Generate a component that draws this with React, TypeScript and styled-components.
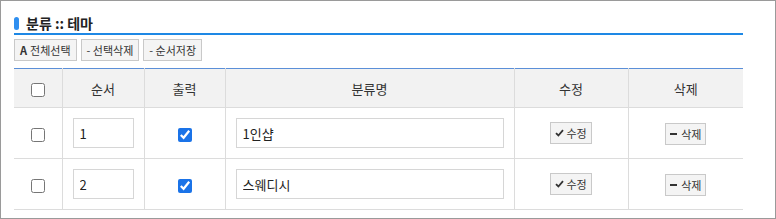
import React from "react";
import styled, { createGlobalStyle } from "styled-components";

const Global = createGlobalStyle`
  html, body { margin: 0; padding: 0; background: #fff; }
  body { font-family: "Noto Sans CJK KR", "Noto Sans", sans-serif; color: #333; }
  * { box-sizing: border-box; }
`;

const Frame = styled.div`
  width: 776px;
  height: 219px;
  border: 1px solid #9a9a9a;
  padding: 12px 32px 0 13px;
  display: flex;
  flex-direction: column;
  overflow: hidden;
`;

const TitleBar = styled.div`
  display: flex;
  align-items: center;
  gap: 7px;
  height: 20px;
  border-bottom: 2px solid #1e88e5;
  box-sizing: content-box;
`;

const Pill = styled.span`
  width: 5px;
  height: 13px;
  border-radius: 3px;
  background: #2f8ff0;
  margin-top: 1px;
`;

const Title = styled.h2`
  margin: 0;
  font-size: 14px;
  font-weight: 700;
  color: #222;
  line-height: 20px;
`;

const Toolbar = styled.div`
  display: flex;
  gap: 4px;
  margin-top: 4px;
`;

const ToolButton = styled.button`
  height: 22px;
  padding: 0 5px;
  border: 1px solid #c9c9c9;
  background: #f4f4f4;
  font-family: inherit;
  font-size: 11px;
  color: #333;
  display: flex;
  align-items: center;
  gap: 3px;
  cursor: pointer;
  b { font-weight: 700; font-size: 11px; }
`;

const Table = styled.table`
  margin-top: 7px;
  width: 729px;
  border-collapse: collapse;
  border-top: 1px solid #5b8fd8;
  table-layout: fixed;
  font-size: 12px;
`;

const Th = styled.th<{ $last?: boolean }>`
  height: 39px;
  background: #f2f2f2;
  font-weight: 400;
  font-size: 13px;
  color: #333;
  border-bottom: 1px solid #dcdcdc;
  border-right: ${(p) => (p.$last ? "none" : "1px solid #dcdcdc")};
  text-align: center;
  padding: 0;
`;

const Td = styled.td<{ $last?: boolean }>`
  height: 51px;
  border-bottom: 1px solid #dcdcdc;
  border-right: ${(p) => (p.$last ? "none" : "1px solid #dcdcdc")};
  text-align: center;
  padding: 0;
  vertical-align: middle;
`;

const Check = styled.input`
  width: 14px;
  height: 14px;
  margin: 0;
  vertical-align: middle;
  accent-color: #1a73e8;
`;

const TextInput = styled.input<{ $w: number }>`
  width: ${(p) => p.$w}px;
  height: 30px;
  border: 1px solid #d6d6d6;
  padding: 0 6px;
  font-family: inherit;
  font-size: 13px;
  color: #222;
  outline: none;
`;

const RowButton = styled.button`
  height: 22px;
  padding: 0 4px;
  border: 1px solid #c9c9c9;
  background: #f4f4f4;
  font-family: inherit;
  font-size: 11px;
  color: #333;
  display: inline-flex;
  align-items: center;
  gap: 2px;
  cursor: pointer;
`;

const Dash = styled.span`
  display: inline-block;
  width: 7px;
  height: 2px;
  background: #333;
  margin-right: 2px;
`;

const CheckIcon = () => (
  <svg width="9" height="8" viewBox="0 0 9 8">
    <path d="M1 4.2 L3.4 6.5 L8 1.2" stroke="#333" strokeWidth="1.8" fill="none" />
  </svg>
);

const rows = [
  { order: "1", name: "1인샵" },
  { order: "2", name: "스웨디시" },
];

export default function App() {
  return (
    <>
      <Global />
      <Frame>
        <TitleBar>
          <Pill />
          <Title>분류 :: 테마</Title>
        </TitleBar>
        <Toolbar>
          <ToolButton><b>A</b>전체선택</ToolButton>
          <ToolButton>- 선택삭제</ToolButton>
          <ToolButton>- 순서저장</ToolButton>
        </Toolbar>
        <Table>
          <colgroup>
            <col style={{ width: 48 }} />
            <col style={{ width: 82 }} />
            <col style={{ width: 81 }} />
            <col style={{ width: 289 }} />
            <col style={{ width: 114 }} />
            <col style={{ width: 115 }} />
          </colgroup>
          <thead>
            <tr>
              <Th><Check type="checkbox" readOnly /></Th>
              <Th>순서</Th>
              <Th>출력</Th>
              <Th>분류명</Th>
              <Th>수정</Th>
              <Th $last>삭제</Th>
            </tr>
          </thead>
          <tbody>
            {rows.map((r) => (
              <tr key={r.order}>
                <Td><Check type="checkbox" readOnly /></Td>
                <Td><TextInput $w={61} defaultValue={r.order} /></Td>
                <Td><Check type="checkbox" defaultChecked /></Td>
                <Td><TextInput $w={268} defaultValue={r.name} /></Td>
                <Td><RowButton><CheckIcon />수정</RowButton></Td>
                <Td $last><RowButton><Dash />삭제</RowButton></Td>
              </tr>
            ))}
          </tbody>
        </Table>
      </Frame>
    </>
  );
}
